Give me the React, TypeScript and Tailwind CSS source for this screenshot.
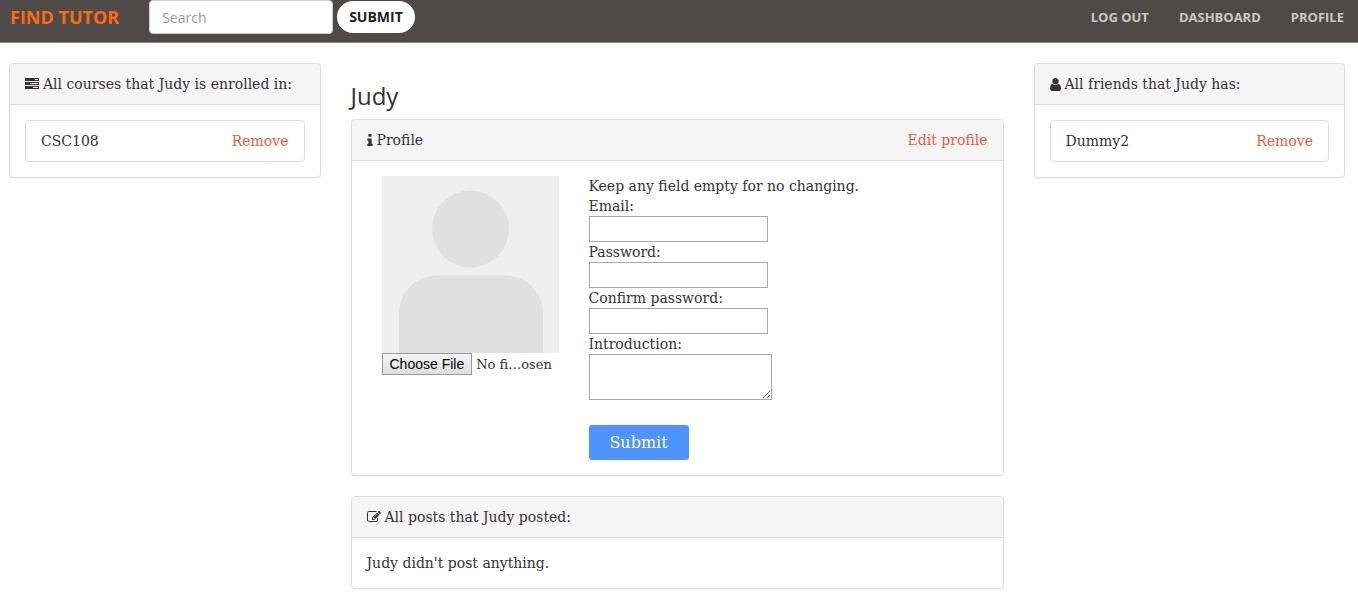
import type { ReactNode } from 'react';

function Icon({ viewBox, className, d }: { viewBox: string; className: string; d: string }) {
  return (
    <svg viewBox={viewBox} className={className} fill="currentColor" aria-hidden="true">
      <path d={d} />
    </svg>
  );
}

const TasksIcon = () => (
  <Icon
    viewBox="0 0 1792 1792"
    className="h-[14px] w-[14px] shrink-0"
    d="M1024 1408h640v-128h-640v128zm-384-512h1024v-128h-1024v128zm640-512h384v-128h-384v128zm512 832v256q0 26-19 45t-45 19h-1664q-26 0-45-19t-19-45v-256q0-26 19-45t45-19h1664q26 0 45 19t19 45zm0-512v256q0 26-19 45t-45 19h-1664q-26 0-45-19t-19-45v-256q0-26 19-45t45-19h1664q26 0 45 19t19 45zm0-512v256q0 26-19 45t-45 19h-1664q-26 0-45-19t-19-45v-256q0-26 19-45t45-19h1664q26 0 45 19t19 45z"
  />
);

const UserIcon = () => (
  <Icon
    viewBox="256 0 1280 1664"
    className="h-[14px] w-[11px] shrink-0"
    d="M1536 1399q0 109-62.5 187t-150.5 78h-854q-88 0-150.5-78t-62.5-187q0-85 8.5-160.5t31.5-152 58.5-131 94-89 134.5-34.5q131 128 313 128t313-128q76 0 134.5 34.5t94 89 58.5 131 31.5 152 8.5 160.5zm-256-887q0 159-112.5 271.5t-271.5 112.5-271.5-112.5-112.5-271.5 112.5-271.5 271.5-112.5 271.5 112.5 112.5 271.5z"
  />
);

const InfoIcon = () => (
  <Icon
    viewBox="576 0 640 1664"
    className="h-[14px] w-[6px] shrink-0"
    d="M1216 1344v128q0 26-19 45t-45 19h-512q-26 0-45-19t-19-45v-128q0-26 19-45t45-19h64v-384h-64q-26 0-45-19t-19-45v-128q0-26 19-45t45-19h384q26 0 45 19t19 45v576h64q26 0 45 19t19 45zm-128-1152v192q0 26-19 45t-45 19h-256q-26 0-45-19t-19-45v-192q0-26 19-45t45-19h256q26 0 45 19t19 45z"
  />
);

const EditIcon = () => (
  <Icon
    viewBox="0 0 1792 1792"
    className="h-[14px] w-[14px] shrink-0"
    d="M888 1184l116-116-152-152-116 116v56h96v96h56zm440-720q-16-16-33 1l-350 350q-17 17-1 33t33-1l350-350q17-17 1-33zm80 594v190q0 119-84.5 203.5t-203.5 84.5h-832q-119 0-203.5-84.5t-84.5-203.5v-832q0-119 84.5-203.5t203.5-84.5h832q63 0 117 25 15 7 18 23 3 17-9 29l-49 49q-14 14-32 8-23-6-45-6h-832q-66 0-113 47t-47 113v832q0 66 47 113t113 47h832q66 0 113-47t47-113v-126q0-13 9-22l64-64q15-15 35-7t20 29zm-96-738l288 288-672 672h-288v-288zm444 132l-92 92-288-288 92-92q28-28 68-28t68 28l152 152q28 28 28 68t-28 68z"
  />
);

function Panel({ icon, title, action, children }: { icon: ReactNode; title: string; action?: ReactNode; children: ReactNode }) {
  return (
    <section className="mb-5 overflow-hidden rounded border border-[#ddd] bg-white shadow-[0_1px_1px_rgba(0,0,0,0.05)]">
      <header className="flex items-center justify-between border-b border-[#ddd] bg-[#f5f5f5] px-[15px] py-[10px]">
        <h2 className="flex items-center gap-1">
          {icon}
          <span>{title}</span>
        </h2>
        {action}
      </header>
      <div className="p-[15px]">{children}</div>
    </section>
  );
}

function ListItem({ name }: { name: string }) {
  return (
    <ul>
      <li className="flex justify-between rounded border border-[#ddd] px-[15px] py-[10px]">
        <span>{name}</span>
        <a href="#remove" className="text-[#eb5e3c]">Remove</a>
      </li>
    </ul>
  );
}

function Field({ id, label, type }: { id: string; label: string; type: string }) {
  return (
    <>
      <label htmlFor={id} className="block">{label}</label>
      <input id={id} type={type} className="block h-[26px] w-[179px] border border-[#a9a9a9] bg-white px-1" />
    </>
  );
}

function Avatar() {
  return (
    <svg viewBox="0 0 177 177" className="block w-full" role="img" aria-label="Profile picture">
      <rect width="177" height="177" fill="#efefef" />
      <circle cx="88.5" cy="53" r="38.5" fill="#e0e0e0" />
      <path d="M17 177v-40a37.500 37.500 0 0 1 37.500-37.500h69a37.500 37.500 0 0 1 37.500 37.500v40z" fill="#e0e0e0" />
    </svg>
  );
}

export default function App() {
  return (
    <div className="font-['DejaVu_Serif',serif] text-[14px] leading-5 text-[#333]">
      <nav className="flex items-start justify-between border-b border-[#888] bg-[#4e4a49] pr-[14px] pb-2 pl-[10px] font-['Open_Sans',sans-serif]">
        <div className="flex items-center">
          <a href="#home" className="mr-[30px] text-[18px] font-bold text-[#ff6a0d]">FIND TUTOR</a>
          <form className="flex items-center gap-1" onSubmit={(e) => e.preventDefault()}>
            <input
              type="text"
              aria-label="Search"
              placeholder="Search"
              className="h-[34px] w-[184px] rounded border border-[#ccc] bg-white px-3 text-[14px] placeholder:text-[#999]"
            />
            <button className="h-8 rounded-full bg-white px-3 text-[14px] font-bold text-[#222]">SUBMIT</button>
          </form>
        </div>
        <div className="flex h-[34px] items-center gap-[30px] text-[13px] font-bold text-[#c8c8c8]">
          <a href="#logout">LOG OUT</a>
          <a href="#dashboard">DASHBOARD</a>
          <a href="#profile">PROFILE</a>
        </div>
      </nav>

      <main className="grid grid-cols-4 gap-[30px] pt-5 pr-[13px] pl-[9px]">
        <aside>
          <Panel icon={<TasksIcon />} title="All courses that Judy is enrolled in:">
            <ListItem name="CSC108" />
          </Panel>
        </aside>

        <div className="col-span-2">
          <h1 className="mt-5 mb-[10px] font-['Open_Sans',sans-serif] text-[24px] leading-[26px] font-normal">Judy</h1>
          <Panel icon={<InfoIcon />} title="Profile" action={<a href="#edit" className="text-[#eb5e3c]">Edit profile</a>}>
            <form className="flex" onSubmit={(e) => e.preventDefault()}>
              <div className="w-1/3 px-[15px]">
                <Avatar />
                <input
                  type="file"
                  aria-label="Profile picture file"
                  className="block h-[22px] w-full text-[13px] leading-[22px] file:mr-1 file:h-[22px] file:border file:border-solid file:border-[#999] file:bg-linear-to-b file:from-[#f6f6f6] file:to-[#dddddd] file:px-[7px] file:font-['Liberation_Sans',sans-serif] file:text-[14px] file:leading-5 file:text-black"
                />
              </div>
              <div className="w-2/3 px-[15px]">
                <p>Keep any field empty for no changing.</p>
                <Field id="email" label="Email:" type="email" />
                <Field id="password" label="Password:" type="password" />
                <Field id="confirm" label="Confirm password:" type="password" />
                <label htmlFor="intro" className="block">Introduction:</label>
                <textarea id="intro" className="block h-[46px] w-[183px] border border-[#a9a9a9] bg-white p-[2px]" />
                <button className="mt-[25px] block h-[35px] w-[100px] rounded-[3px] bg-[#4d94ff] text-[16px] text-white">
                  Submit
                </button>
              </div>
            </form>
          </Panel>
          <Panel icon={<EditIcon />} title="All posts that Judy posted:">
            <p>Judy didn't post anything.</p>
          </Panel>
        </div>

        <aside>
          <Panel icon={<UserIcon />} title="All friends that Judy has:">
            <ListItem name="Dummy2" />
          </Panel>
        </aside>
      </main>
    </div>
  );
}
